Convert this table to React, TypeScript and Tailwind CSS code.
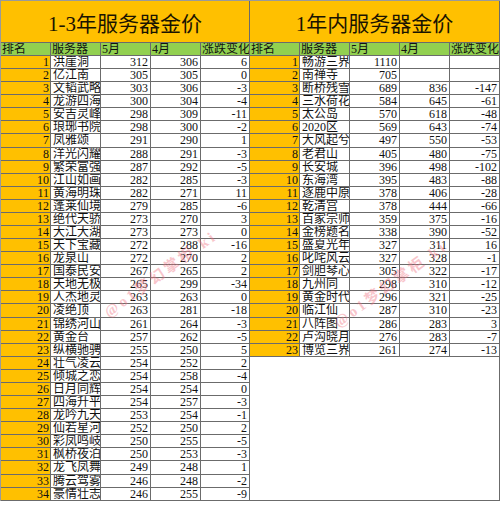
import React from "react";

type Row = [number, string, string, string, string];

const LEFT: Row[] = [
  [1, "洪崖洞", "312", "306", "6"],
  [2, "亿江南", "305", "305", "0"],
  [3, "文韬武略", "303", "306", "-3"],
  [4, "龙游四海", "300", "304", "-4"],
  [5, "安吉灵峰", "298", "309", "-11"],
  [6, "琅琊书院", "298", "300", "-2"],
  [7, "凤雅颂", "291", "290", "1"],
  [8, "洋光闪耀", "288", "291", "-3"],
  [9, "繁荣富强", "287", "292", "-5"],
  [10, "江山如画", "282", "285", "-3"],
  [11, "黄海明珠", "282", "271", "11"],
  [12, "蓬莱仙境", "279", "285", "-6"],
  [13, "绝代天骄", "273", "270", "3"],
  [14, "大江大湖", "273", "273", "0"],
  [15, "天下宝藏", "272", "288", "-16"],
  [16, "龙泉山", "272", "270", "2"],
  [17, "国泰民安", "267", "265", "2"],
  [18, "天地无极", "265", "299", "-34"],
  [19, "人杰地灵", "263", "263", "0"],
  [20, "凌绝顶", "263", "281", "-18"],
  [21, "锦绣河山", "261", "264", "-3"],
  [22, "黄金台", "257", "262", "-5"],
  [23, "纵横驰骋", "255", "250", "5"],
  [24, "壮气凌云", "254", "252", "2"],
  [25, "倾城之恋", "254", "258", "-4"],
  [26, "日月同辉", "254", "254", "0"],
  [27, "四海升平", "254", "257", "-3"],
  [28, "龙吟九天", "253", "254", "-1"],
  [29, "仙若星河", "252", "250", "2"],
  [30, "彩凤鸣岐", "250", "255", "-5"],
  [31, "枫桥夜泊", "250", "253", "-3"],
  [32, "龙飞凤舞", "249", "248", "1"],
  [33, "腾云驾雾", "246", "248", "-2"],
  [34, "豪情壮志", "246", "255", "-9"],
];

const RIGHT: Row[] = [
  [1, "畅游三界", "1110", "", ""],
  [2, "南禅寺", "705", "", ""],
  [3, "断桥残雪", "689", "836", "-147"],
  [4, "三水荷花", "584", "645", "-61"],
  [5, "太公岛", "570", "618", "-48"],
  [6, "2020区", "569", "643", "-74"],
  [7, "大风起兮", "497", "550", "-53"],
  [8, "老君山", "405", "480", "-75"],
  [9, "长安城", "396", "498", "-102"],
  [10, "东海湾", "395", "483", "-88"],
  [11, "逐鹿中原", "378", "406", "-28"],
  [12, "乾清宫", "378", "444", "-66"],
  [13, "百家宗师", "359", "375", "-16"],
  [14, "金榜题名", "338", "390", "-52"],
  [15, "盛夏光年", "327", "311", "16"],
  [16, "叱咤风云", "327", "328", "-1"],
  [17, "剑胆琴心", "305", "322", "-17"],
  [18, "九州同", "298", "310", "-12"],
  [19, "黄金时代", "296", "321", "-25"],
  [20, "临江仙", "287", "310", "-23"],
  [21, "八阵图", "286", "283", "3"],
  [22, "卢沟晓月", "276", "283", "-7"],
  [23, "博览三界", "261", "274", "-13"],
];

const FONT = {
  fontFamily: '"Liberation Serif", "Noto Sans CJK SC", serif',
};

function Table({
  title,
  rows,
  cols,
  fill,
}: {
  title: string;
  rows: Row[];
  cols: string;
  fill?: boolean;
}) {
  return (
    <div className="flex w-[250px] flex-col">
      <div className="flex h-[42px] items-center justify-center border-b border-r border-[#6b6b6b] bg-[#ffc000] pt-[5px] text-[21px] leading-none text-[#1a1400]">
        {title}
      </div>
      <div
        className={`grid ${cols} h-[13px] border-b border-[#6b6b6b] bg-[#92d050] text-[12px] leading-[12px] text-[#111]`}
      >
        {["排名", "服务器", "5月", "4月", "涨跌变化"].map((h) => (
          <div
            key={h}
            className="overflow-hidden whitespace-nowrap border-r border-[#6b6b6b] pl-[1px]"
          >
            {h}
          </div>
        ))}
      </div>
      {rows.map((r) => (
        <div
          key={r[0]}
          className={`grid ${cols} h-[13.09px] border-b border-[#6b6b6b] text-[12px] leading-[12px] text-[#111]`}
        >
          <div className="border-r border-[#6b6b6b] bg-[#ffc000] pr-[1px] text-right">
            {r[0]}
          </div>
          <div className="overflow-hidden whitespace-nowrap border-r border-[#6b6b6b] bg-white pl-[2px]">
            {r[1]}
          </div>
          <div className="border-r border-[#6b6b6b] bg-white pr-[2px] text-right">
            {r[2]}
          </div>
          <div className="border-r border-[#6b6b6b] bg-white pr-[2px] text-right">
            {r[3]}
          </div>
          <div className="border-r border-[#6b6b6b] bg-white pr-[2px] text-right">
            {r[4]}
          </div>
        </div>
      ))}
      {fill && (
        <div className="flex-1 border-b border-r border-[#6b6b6b] bg-white" />
      )}
    </div>
  );
}

export default function App() {
  return (
    <div className="h-[506px] w-[500px] overflow-hidden bg-white" style={FONT}>
      <div className="relative flex h-[501px] border-l border-t border-[#9a9a9a]">
        <Table
          title="1-3年服务器金价"
          rows={LEFT}
          cols="grid-cols-[50px_50px_50px_50px_49px]"
        />
        <Table
          title="1年内服务器金价"
          rows={RIGHT}
          cols="grid-cols-[50px_50px_50px_50px_50px]"
          fill
        />
        <div className="pointer-events-none absolute left-[92px] top-[262px] -rotate-[36deg] whitespace-nowrap text-[15px] font-bold tracking-[3px] text-[#f07080] opacity-40">
          @o1梦幻掌柜 ki
        </div>
        <div className="pointer-events-none absolute left-[322px] top-[272px] -rotate-[36deg] whitespace-nowrap text-[15px] font-bold tracking-[3px] text-[#f07080] opacity-40">
          @o1梦幻掌柜 ki
        </div>
      </div>
    </div>
  );
}
